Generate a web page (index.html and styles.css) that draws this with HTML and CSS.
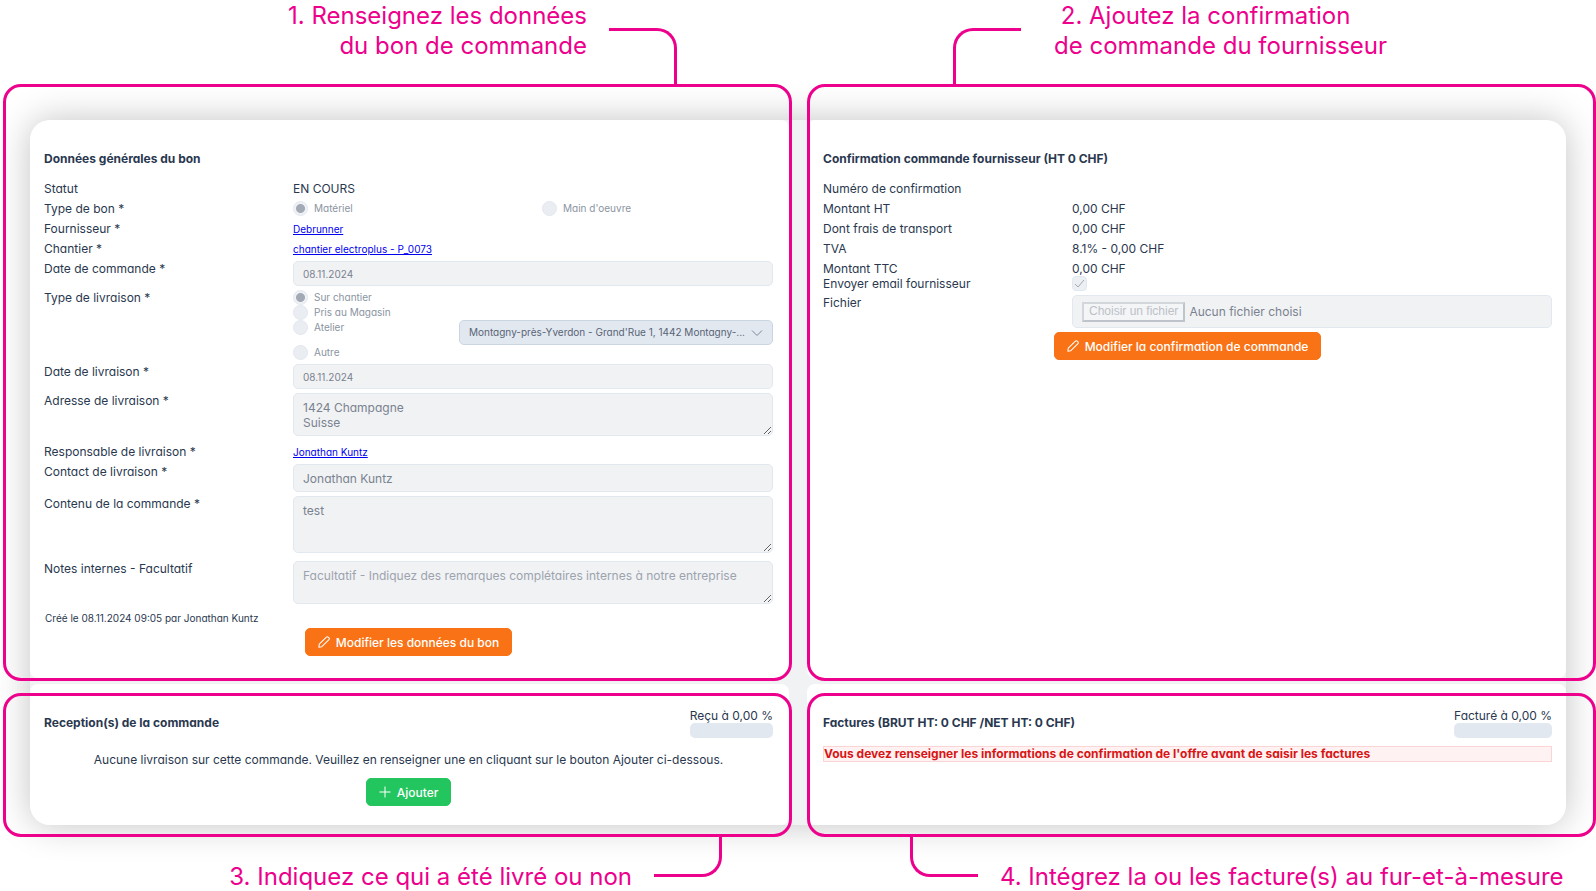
FILE: index.html
```html
<!DOCTYPE html>
<html lang="fr">
<head>
<meta charset="utf-8">
<title>Bon de commande</title>
<link rel="stylesheet" href="styles.css">
</head>
<body>
<header class="callouts callouts-top">
  <div class="callout callout-left">
    <p class="callout-text">1. Renseignez les données<br>du bon de commande</p>
    <span class="connector connector-1"></span>
  </div>
  <div class="callout callout-right">
    <span class="connector connector-2"></span>
    <p class="callout-text">&nbsp;2. Ajoutez la confirmation<br>de commande du fournisseur</p>
  </div>
</header>

<main class="sheet">
  <section class="panel panel-order">
    <h2 class="title">Données générales du bon</h2>
    <form class="rows">
      <div class="row"><span>Statut</span><span>EN COURS</span></div>
      <div class="row"><span>Type de bon *</span>
        <div class="halves">
          <label class="choice"><input type="radio" name="type" checked disabled>Matériel</label>
          <label class="choice"><input type="radio" name="type" disabled>Main d'oeuvre</label>
        </div>
      </div>
      <div class="row"><span>Fournisseur *</span><a class="link" href="#">Debrunner</a></div>
      <div class="row"><span>Chantier *</span><a class="link" href="#">chantier electroplus - P_0073</a></div>
      <div class="row"><label for="date-cmd">Date de commande *</label><input class="field field-small" id="date-cmd" type="text" value="08.11.2024" disabled></div>
      <div class="row"><span>Type de livraison *</span>
        <div>
          <label class="choice"><input type="radio" name="liv" checked disabled>Sur chantier</label>
          <label class="choice"><input type="radio" name="liv" disabled>Pris au Magasin</label>
          <div class="thirds">
            <label class="choice"><input type="radio" name="liv" disabled>Atelier</label>
            <div class="select">
              <select aria-label="Atelier" disabled><option>Montagny-près-Yverdon - Grand'Rue 1, 1442 Montagny-...</option></select>
              <svg class="chevron" viewBox="0 0 12 12"><path d="M1 3.5 6 8.5 11 3.5"/></svg>
            </div>
          </div>
          <label class="choice"><input type="radio" name="liv" disabled>Autre</label>
        </div>
      </div>
      <div class="row"><label for="date-liv">Date de livraison *</label><input class="field field-small" id="date-liv" type="text" value="08.11.2024" disabled></div>
      <div class="row"><label for="adresse">Adresse de livraison *</label><textarea class="field area" id="adresse" disabled>1424 Champagne
Suisse</textarea></div>
      <div class="row"><span>Responsable de livraison *</span><a class="link" href="#">Jonathan Kuntz</a></div>
      <div class="row"><label for="contact">Contact de livraison *</label><input class="field" id="contact" type="text" value="Jonathan Kuntz" disabled></div>
      <div class="row"><label for="contenu">Contenu de la commande *</label><textarea class="field area area-tall" id="contenu" disabled>test</textarea></div>
      <div class="row"><label for="notes">Notes internes - Facultatif</label><textarea class="field area" id="notes" placeholder="Facultatif - Indiquez des remarques complétaires internes à notre entreprise" disabled></textarea></div>
      <p class="created">Créé le 08.11.2024 09:05 par Jonathan Kuntz</p>
      <button class="btn btn-orange" type="button"><svg class="icon" viewBox="0 0 14 14"><path d="M1 13l.5-3.500L9.800 1.200a1.400 1.400 0 0 1 2 0l1 1a1.400 1.400 0 0 1 0 2L4.500 12.500z"/></svg>Modifier les données du bon</button>
    </form>
  </section>

  <section class="panel panel-confirm">
    <h2 class="title">Confirmation commande fournisseur (HT 0 CHF)</h2>
    <form class="rows">
      <div class="row"><span>Numéro de confirmation</span></div>
      <div class="row"><span>Montant HT</span><span>0,00 CHF</span></div>
      <div class="row"><span>Dont frais de transport</span><span>0,00 CHF</span></div>
      <div class="row"><span>TVA</span><span>8.1% - 0,00 CHF</span></div>
      <div class="tight">
        <div class="row"><span>Montant TTC</span><span>0,00 CHF</span></div>
        <div class="row"><label for="email">Envoyer email fournisseur</label>
          <span class="check"><input id="email" type="checkbox" checked disabled><svg class="tick" viewBox="0 0 15 15"><path d="M3 8l3 3 6-7"/></svg></span></div>
      </div>
      <div class="row"><span>Fichier</span>
        <div class="field file"><button class="file-btn" type="button" disabled>Choisir un fichier</button><span>Aucun fichier choisi</span></div>
      </div>
      <button class="btn btn-orange" type="button"><svg class="icon" viewBox="0 0 14 14"><path d="M1 13l.5-3.500L9.800 1.200a1.400 1.400 0 0 1 2 0l1 1a1.400 1.400 0 0 1 0 2L4.500 12.500z"/></svg>Modifier la confirmation de commande</button>
    </form>
  </section>

  <section class="panel panel-low panel-reception">
    <div class="head"><h2 class="title">Reception(s) de la commande</h2>
      <div class="progress"><span>Reçu à 0,00 %</span><div class="bar"></div></div></div>
    <p class="empty">Aucune livraison sur cette commande. Veuillez en renseigner une en cliquant sur le bouton Ajouter ci-dessous.</p>
    <button class="btn btn-green" type="button"><svg class="icon" viewBox="0 0 14 14"><path d="M7 .5v13M.5 7h13"/></svg>Ajouter</button>
  </section>

  <section class="panel panel-low panel-invoices">
    <div class="head"><h2 class="title">Factures (BRUT HT: 0 CHF /NET HT: 0 CHF)</h2>
      <div class="progress"><span>Facturé à 0,00 %</span><div class="bar"></div></div></div>
    <p class="error">Vous devez renseigner les informations de confirmation de l'offre avant de saisir les factures</p>
  </section>
</main>

<footer class="callouts callouts-bottom">
  <div class="callout callout-left">
    <p class="callout-text">3. Indiquez ce qui a été livré ou non</p>
    <span class="connector connector-3"></span>
  </div>
  <div class="callout callout-right">
    <span class="connector connector-4"></span>
    <p class="callout-text">4. Intégrez la ou les facture(s) au fur-et-à-mesure</p>
  </div>
</footer>
</body>
</html>
```

FILE: styles.css
```css
* { box-sizing: border-box; }

body {
  margin: 0;
  background: #fff;
  color: #2a384f;
  font-family: Inter, "Liberation Sans", sans-serif;
  font-size: 12px;
  line-height: 15px;
}

p, h2 { margin: 0; }

button, input, select, textarea {
  font: inherit;
  font-feature-settings: inherit;
  color: inherit;
  margin: 0;
}

/* Pink annotations */
.callouts {
  display: grid;
  grid-template-columns: 1fr 1fr;
}
.callouts-top { height: 84px; }
.callouts-bottom { height: 54px; margin-top: 12px; }

.callout { display: flex; gap: 22px; }
.callouts-top .callout { align-items: flex-end; }
.callouts-bottom .callout { align-items: flex-start; }
.callout-left { justify-content: flex-end; text-align: right; }

.callout-text {
  color: #ec008c;
  font-size: 24px;
  font-weight: 400;
  font-variation-settings: "opsz" 14, "wght" 300;
  line-height: 30px;
  white-space: nowrap;
}
.callouts-top .callout-text { align-self: flex-start; padding-top: 1px; }
.callouts-bottom .callout-text { align-self: flex-end; line-height: 28px; }

.connector {
  flex: none;
  width: 68px;
  border: 0 solid #ec008c;
}
.connector-1 { height: 56px; border-width: 3px 3px 0 0; border-top-right-radius: 20px; }
.connector-2 { height: 56px; border-width: 3px 0 0 3px; border-top-left-radius: 20px; }
.connector-3 { height: 40px; border-width: 0 3px 3px 0; border-bottom-right-radius: 20px; }
.connector-4 { height: 40px; border-width: 0 0 3px 3px; border-bottom-left-radius: 20px; }

.callouts-top .callout-left { padding-right: 121px; }
.callouts-top .callout-right { padding-left: 155px; gap: 33px; }
.callouts-bottom .callout-left { padding-right: 76px; }
.callouts-bottom .callout-right { padding-left: 112px; }

/* Sheet */
.sheet {
  display: grid;
  grid-template-columns: minmax(0, 1fr) minmax(0, 1fr);
  gap: 6px 18px;
  margin: 36px 30px 0;
  border-radius: 20px;
  background: #f1f2f4;
  box-shadow: 0 0 36px rgba(0, 0, 0, 0.24);
  font-feature-settings: "cv11";
}

.panel {
  position: relative;
  background: #fff;
  border-radius: 8px;
  padding: 31px 16px 22px 14px;
}
.panel::after {
  content: "";
  position: absolute;
  border: 3px solid #ec008c;
  border-radius: 18px;
  pointer-events: none;
}
.panel-order { border-top-left-radius: 20px; }
.panel-order::after { inset: -36px -3px -3px -27px; }
.panel-confirm { border-top-right-radius: 20px; padding: 31px 14px 22px 16px; }
.panel-confirm::after { inset: -36px -30px -3px 0; }
.panel-low { padding-top: 24px; padding-bottom: 19px; }
.panel-reception { border-bottom-left-radius: 20px; }
.panel-reception::after { inset: 9px -3px -12px -27px; }
.panel-invoices { border-bottom-right-radius: 20px; padding-left: 16px; padding-right: 14px; }
.panel-invoices::after { inset: 9px -30px -12px 0; }

.title {
  font-size: 12px;
  font-weight: 700;
  line-height: 16px;
}

.rows {
  display: flex;
  flex-direction: column;
  gap: 4px;
  margin-top: 14px;
}
.row {
  display: grid;
  grid-template-columns: minmax(0, 1fr) minmax(0, 2fr);
  column-gap: 9px;
  align-items: start;
  min-height: 16px;
}
.tight .row { min-height: 15px; }

.link {
  justify-self: start;
  color: #0000ee;
  font-size: 10px;
  line-height: 16px;
}

.field {
  width: 100%;
  height: 28px;
  padding: 0 9px;
  border: 1px solid #e2e8f0;
  border-radius: 5px;
  background: #f1f2f4;
  color: #79828f;
}
.field-small { height: 25px; font-size: 10px; }
.area {
  display: block;
  height: 43px;
  margin-bottom: 4px;
  padding: 6px 9px;
  overflow: hidden;
  resize: vertical;
}
.area-tall { height: 57px; }
.area::placeholder { color: #9ca3ae; }

.halves { display: grid; grid-template-columns: 1fr 1fr; column-gap: 18px; }
.thirds { display: grid; grid-template-columns: 1fr 2fr; column-gap: 9px; align-items: start; }

.choice {
  display: flex;
  align-items: center;
  gap: 6px;
  color: #8a94a1;
  font-size: 10px;
}
.choice input {
  appearance: none;
  width: 15px;
  height: 15px;
  border: 1px solid #e2e8f0;
  border-radius: 50%;
  background: #eaeef2;
}
.choice input:checked {
  background: radial-gradient(circle, #a3aab5 4px, #eff1f4 5px);
}

.select { position: relative; }
.select select {
  display: block;
  appearance: none;
  width: 100%;
  height: 25px;
  padding: 0 24px 0 9px;
  border: 1px solid #cbd5e1;
  border-radius: 5px;
  background: #e2e8f0;
  color: #586475;
  font-size: 10px;
  opacity: 1;
}
.chevron {
  position: absolute;
  top: 7px;
  right: 10px;
  width: 12px;
  height: 12px;
  fill: none;
  stroke: #7b8798;
}

.created { padding-left: 1px; font-size: 10px; line-height: 12px; }

.btn {
  display: flex;
  align-items: center;
  align-self: center;
  gap: 6px;
  height: 28px;
  padding: 0 12px;
  border: 1px solid #f97316;
  border-radius: 5px;
  background: #f97316;
  color: #fff;
  font-weight: 500;
}
.btn-green { margin: 11px auto 0; border-color: #22c55e; background: #22c55e; }
.icon { width: 12px; height: 12px; fill: none; stroke: #fff; stroke-width: 1.2; stroke-linejoin: round; }

.check { position: relative; width: 15px; height: 15px; }
.check input {
  display: block;
  appearance: none;
  width: 15px;
  height: 15px;
  border: 1px solid #e2e8f0;
  border-radius: 4px;
  background: #edf0f3;
}
.tick { position: absolute; inset: 0; fill: none; stroke: #a0a8b4; }

.file {
  display: flex;
  align-items: center;
  gap: 4px;
  height: 33px;
}
.file-btn {
  height: 20px;
  padding: 0 5px;
  border: 2px solid;
  border-color: #d3d6db #bfc4cb #bfc4cb #d3d6db;
  background: #f4f5f6;
  color: #bcc1c8;
  font-family: "Liberation Sans", sans-serif;
  line-height: 15px;
}
.file + .btn { margin-top: 1px; }

.head { display: flex; align-items: center; justify-content: space-between; }
.bar { height: 15px; border-radius: 5px; background: #e2e8f0; }
.empty { margin-top: 14px; text-align: center; }
.error {
  margin-top: 8px;
  border: 1px solid #fbd5d5;
  background: #fef2f2;
  color: #d81515;
  font-weight: 700;
  line-height: 14px;
}
```
